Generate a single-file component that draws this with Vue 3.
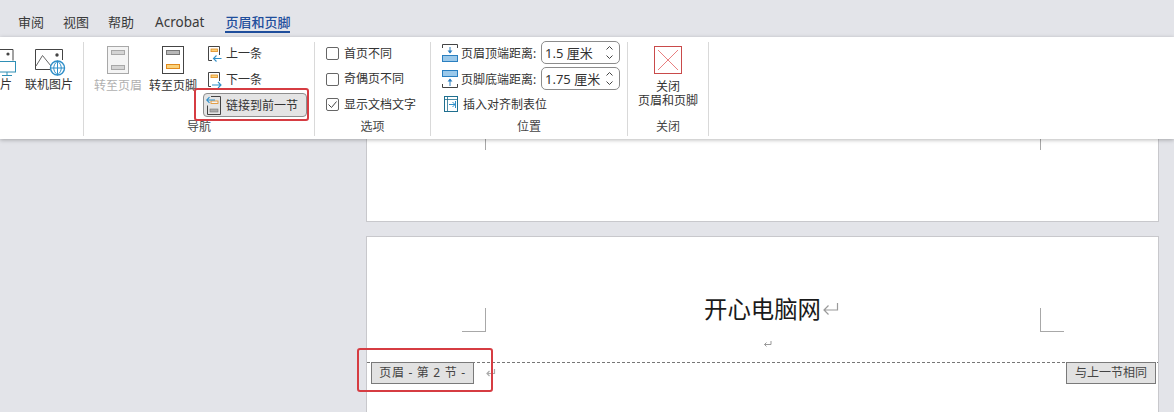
<script setup>
const tabs = ['审阅', '视图', '帮助', 'Acrobat']
</script>

<template>
  <div class="app">
    <nav class="tabs">
      <span v-for="t in tabs" :key="t" class="tab">{{ t }}</span>
      <span class="tab active">页眉和页脚</span>
    </nav>

    <section class="ribbon">
      <div class="group g-insert">
        <div class="group-body insert-body">
          <div class="big clipped">
            <svg class="ico-pic" width="29" height="30" viewBox="0 0 29 30">
              <path d="M.5 3.500h25.500v11" fill="none" stroke="#444" />
              <circle cx="21" cy="8" r="1.600" fill="#444" />
              <rect x="6.500" y="15.500" width="22" height="10.500" fill="#fff" stroke="#2f8fb5" />
              <path d="M20 26v3M15 29.500h10" stroke="#2f8fb5" />
            </svg>
            <span>图片</span>
          </div>
          <div class="big">
            <svg class="ico-online" width="32" height="30" viewBox="0 0 32 30">
              <path d="M28.500 14V3.500H1.500v20H16" fill="none" stroke="#444" />
              <path d="M2 20L8.500 9.500 17 20" fill="none" stroke="#666" />
              <circle cx="23" cy="9" r="1.700" fill="#444" />
              <circle cx="23.500" cy="22" r="7" fill="#fff" stroke="#2f8fc9" stroke-width="1.400" />
              <path d="M16.500 22h14M23.500 15v14M23.500 15c-5 4-5 10 0 14M23.500 15c5 4 5 10 0 14" fill="none" stroke="#2f8fc9" />
            </svg>
            <span>联机图片</span>
          </div>
        </div>
      </div>

      <div class="group g-nav">
        <div class="group-body nav-body">
          <div class="big disabled">
            <svg width="22" height="28" viewBox="0 0 22 28">
              <rect x=".5" y=".5" width="21" height="27" fill="#f4f4f4" stroke="#a8a8a8" />
              <rect x="4.500" y="4.500" width="13" height="4" fill="#d4d4d4" stroke="#a8a8a8" />
              <rect x="4.500" y="19.500" width="13" height="4" fill="#d4d4d4" stroke="#a8a8a8" />
            </svg>
            <span>转至页眉</span>
          </div>
          <div class="big">
            <svg width="22" height="28" viewBox="0 0 22 28">
              <rect x=".5" y=".5" width="21" height="27" fill="#fff" stroke="#444" />
              <rect x="4.500" y="4.500" width="13" height="4" fill="#b8b8b8" stroke="#777" />
              <rect x="4.500" y="18.500" width="13" height="4" fill="#fbd27a" stroke="#e08a1e" />
            </svg>
            <span>转至页脚</span>
          </div>
          <div class="nav-col">
            <div class="small">
              <svg width="14" height="16" viewBox="0 0 14 16">
                <path d="M11.500 9V.5H.5v14H4" fill="none" stroke="#444" />
                <rect x="3" y="3" width="6.500" height="2.600" fill="#fbd27a" stroke="#e08a1e" stroke-width=".8" />
                <path d="M13.500 12.500H5.500M8.500 9.500l-3 3 3 3" fill="none" stroke="#2f8fc9" stroke-width="1.100" />
              </svg>
              <span>上一条</span>
            </div>
            <div class="small">
              <svg width="14" height="17" viewBox="0 0 14 17">
                <path d="M11.500 9V.5H.5v14H3" fill="none" stroke="#444" />
                <rect x="3" y="3" width="6.500" height="2.600" fill="#fbd27a" stroke="#e08a1e" stroke-width=".8" />
                <path d="M4 13h9M10 10l3 3-3 3" fill="none" stroke="#2f8fc9" stroke-width="1.100" />
              </svg>
              <span>下一条</span>
            </div>
            <button class="link-btn">
              <svg width="15" height="19" viewBox="0 0 15 19">
                <path d="M5 .5h9.500v18H1.500v-9" fill="none" stroke="#444" />
                <rect x="5" y="5" width="7" height="2.500" fill="#f4f4f4" stroke="#e08a1e" stroke-width=".8" />
                <rect x="4" y="13" width="8" height="3" fill="#aaa" stroke="#777" stroke-width=".6" />
                <path d="M9 4H.7M3.500 1.200L.7 4l2.800 2.800" fill="none" stroke="#2f8fc9" stroke-width="1.100" />
              </svg>
              <span>链接到前一节</span>
            </button>
          </div>
        </div>
        <div class="group-label">导航</div>
      </div>

      <div class="group g-opts">
        <div class="group-body opts-body">
          <label class="check"><i class="box"></i>首页不同</label>
          <label class="check"><i class="box"></i>奇偶页不同</label>
          <label class="check">
            <i class="box">
              <svg width="11" height="11" viewBox="0 0 11 11"><path d="M1.500 5.500l3 3 5-6" fill="none" stroke="#444" /></svg>
            </i>
            显示文档文字
          </label>
        </div>
        <div class="group-label">选项</div>
      </div>

      <div class="group g-pos">
        <div class="group-body pos-body">
          <div class="pos-row">
            <svg width="16" height="18" viewBox="0 0 16 18">
              <path d="M.5 4V.5h15V4" fill="none" stroke="#444" />
              <path d="M8 3v6" stroke="#2a7fc0" />
              <path d="M5.500 6.500L8 9.500l2.500-3z" fill="#2a7fc0" />
              <rect x=".5" y="11.500" width="15" height="6" fill="#9cc9ea" stroke="#2a7fc0" />
            </svg>
            <span class="pos-text">页眉顶端距离:</span>
            <div class="spin">
              <span>1.5 厘米</span>
              <span class="arrows">
                <svg width="7" height="4" viewBox="0 0 7 4"><path d="M.5 3.500l3-3 3 3" fill="none" stroke="#444" /></svg>
                <svg width="7" height="4" viewBox="0 0 7 4"><path d="M.5.500l3 3 3-3" fill="none" stroke="#444" /></svg>
              </span>
            </div>
          </div>
          <div class="pos-row">
            <svg width="16" height="18" viewBox="0 0 16 18">
              <rect x=".5" y=".5" width="15" height="6" fill="#9cc9ea" stroke="#2a7fc0" />
              <path d="M8 9v7" stroke="#2a7fc0" />
              <path d="M5.500 11.500L8 8.500l2.500 3z" fill="#2a7fc0" />
              <path d="M.5 14v3.500h15V14" fill="none" stroke="#444" />
            </svg>
            <span class="pos-text">页脚底端距离:</span>
            <div class="spin">
              <span>1.75 厘米</span>
              <span class="arrows">
                <svg width="7" height="4" viewBox="0 0 7 4"><path d="M.5 3.500l3-3 3 3" fill="none" stroke="#444" /></svg>
                <svg width="7" height="4" viewBox="0 0 7 4"><path d="M.5.500l3 3 3-3" fill="none" stroke="#444" /></svg>
              </span>
            </div>
          </div>
          <div class="pos-row insert-tab">
            <svg width="14" height="16" viewBox="0 0 14 16">
              <rect x=".5" y=".5" width="13" height="15" fill="#fff" stroke="#1f6f8f" />
              <path d="M.5 3.500h13M3.500 .5v15" stroke="#1f6f8f" stroke-width=".8" />
              <path d="M5 8.500h6M8.500 6l2.500 2.500L8.500 11M11.500 5v7" fill="none" stroke="#2f8fc9" />
            </svg>
            <span>插入对齐制表位</span>
          </div>
        </div>
        <div class="group-label">位置</div>
      </div>

      <div class="group g-close">
        <div class="group-body close-body">
          <svg width="28" height="28" viewBox="0 0 28 28">
            <rect x=".5" y=".5" width="27" height="27" fill="#fff" stroke="#c94a4a" />
            <path d="M4 4l20 20M24 4L4 24" stroke="#e88080" />
          </svg>
          <span class="close-text">关闭<br />页眉和页脚</span>
        </div>
        <div class="group-label">关闭</div>
      </div>
    </section>

    <main class="workspace">
      <div class="page page-1">
        <i class="tick tick-l"></i>
        <i class="tick tick-r"></i>
      </div>
      <div class="page page-2">
        <i class="corner corner-l"></i>
        <i class="corner corner-r"></i>
        <div class="title">开心电脑网<svg width="17" height="14" viewBox="0 0 17 14"><path d="M15.500 1v7H2M6.500 3.500L2 8l4.500 4.500" fill="none" stroke="#9a9a9a" stroke-width="1.200" /></svg></div>
        <div class="para-mark">
          <svg width="9" height="8" viewBox="0 0 9 8"><path d="M8 1v3.500H1.500M3.500 2.500l-2 2 2 2" fill="none" stroke="#999" /></svg>
        </div>
        <div class="header-rule"></div>
        <div class="tag tag-left">页眉 - 第 2 节 -</div>
        <svg class="tag-mark" width="11" height="10" viewBox="0 0 11 10"><path d="M9.500 1v4.500H2M4.500 3L2 5.500 4.500 8" fill="none" stroke="#aaa" stroke-width="1.200" /></svg>
        <div class="tag tag-right">与上一节相同</div>
      </div>
    </main>

    <div class="mark mark-btn"></div>
    <div class="mark mark-tag"></div>
  </div>
</template>

<style>
html, body { margin: 0; background: #e3e4e9; }
</style>

<style scoped>
.app {
  position: relative;
  width: 1174px;
  height: 412px;
  overflow: hidden;
  background: #e3e4e9;
  display: flex;
  flex-direction: column;
  font-family: "Noto Sans", "Noto Sans CJK SC", sans-serif;
  font-size: 12px;
  color: #333;
}
.tabs {
  height: 37px;
  flex: none;
  display: flex;
  align-items: flex-start;
  gap: 19px;
  padding-left: 18px;
  box-sizing: border-box;
}
.tab {
  font-size: 13px;
  line-height: 18px;
  margin-top: 13px;
  color: #3a3a3a;
}
.tab:nth-child(4) { margin-left: 2px; font-size: 13.500px; }
.tab.active {
  color: #1f4e9c;
  font-weight: 500;
  margin-left: 2px;
  height: 18px;
  border-bottom: 2px solid #1f4e9c;
}
.ribbon {
  height: 102px;
  flex: none;
  position: relative;
  z-index: 2;
  display: flex;
  background: #fff;
  box-shadow: 0 1px 4px rgba(0, 0, 0, .28);
}
.group {
  position: relative;
  flex: none;
  box-sizing: border-box;
  margin: 5px 0 3px;
  border-right: 1px solid #d9d9d9;
  height: 94px;
}
.group-label {
  position: absolute;
  left: 0;
  right: 0;
  bottom: 1px;
  text-align: center;
  line-height: 16px;
  color: #444;
}
.group-body { display: flex; }
.g-insert { width: 84px; overflow: hidden; }
.insert-body { gap: 13px; margin-left: -12px; padding-top: 4px; }
.big {
  display: flex;
  flex-direction: column;
  align-items: center;
  gap: 3px;
}
.big span { line-height: 18px; white-space: nowrap; }
.insert-body .big { gap: 0; }
.clipped { width: 24px; }
.ico-pic { margin-left: 3px; flex: none; }
.ico-online { margin-left: 2px; flex: none; }
.g-nav { width: 231px; }
.nav-body { padding: 4px 0 0 10px; gap: 7px; }
.disabled span { color: #b0b0b0; }
.nav-col {
  display: flex;
  flex-direction: column;
  margin: -5px 0 0 3px;
}
.small {
  display: flex;
  align-items: center;
  gap: 4px;
  height: 26px;
  line-height: 16px;
  margin-left: 1px;
}
.link-btn {
  width: 104px;
  height: 24px;
  margin: 0 0 0 -4px;
  padding: 0 0 0 2px;
  display: flex;
  align-items: center;
  gap: 5px;
  box-sizing: border-box;
  background: #e4e4e4;
  border: 1px solid #8e8e8e;
  border-radius: 4px;
  font: inherit;
  color: #333;
}
.g-opts { width: 116px; }
.opts-body {
  flex-direction: column;
  margin-top: -1px;
  padding-left: 11px;
}
.check {
  display: flex;
  align-items: center;
  gap: 5px;
  height: 25.500px;
  line-height: 16px;
}
.box {
  width: 13px;
  height: 13px;
  box-sizing: border-box;
  border: 1px solid #666;
  border-radius: 2px;
  display: flex;
  align-items: center;
  justify-content: center;
}
.g-pos { width: 197px; }
.pos-body {
  flex-direction: column;
  padding: 0 0 0 11px;
  gap: 3px;
  margin-top: -1px;
}
.pos-row {
  display: flex;
  align-items: center;
  height: 23px;
  gap: 3px;
}
.pos-text { width: 77px; white-space: nowrap; }
.spin {
  width: 79px;
  height: 23px;
  box-sizing: border-box;
  border: 1px solid #8c8c8c;
  border-radius: 5px;
  padding: 0 6px 0 3px;
  display: flex;
  align-items: center;
  justify-content: space-between;
  font-size: 13px;
  color: #333;
}
.arrows {
  display: flex;
  flex-direction: column;
  gap: 5px;
}
.arrows svg { display: block; }
.insert-tab { gap: 5px; padding-left: 2px; margin-top: -1px; }
.g-close { width: 81px; }
.close-body {
  flex-direction: column;
  align-items: center;
  padding-top: 4px;
  gap: 6px;
}
.close-text {
  text-align: center;
  line-height: 14px;
}
.workspace {
  flex: 1;
  display: flex;
  flex-direction: column;
  gap: 14px;
  padding-left: 366px;
}
.page {
  position: relative;
  width: 793px;
  box-sizing: border-box;
  background: #fff;
  border: 1px solid #c8c8cc;
}
.page-1 { height: 83px; border-top: 0; }
.page-2 { flex: 1; border-bottom: 0; padding-top: 57px; }
.tick {
  position: absolute;
  top: 0;
  width: 1px;
  height: 11px;
  background: #a8a8a8;
}
.tick-l { left: 118px; }
.tick-r { left: 673px; }
.corner {
  position: absolute;
  top: 71px;
  width: 23px;
  height: 23px;
  border-bottom: 1px solid #a8a8a8;
}
.corner-l { left: 95px; border-right: 1px solid #a8a8a8; }
.corner-r { left: 673px; border-left: 1px solid #a8a8a8; }
.title {
  display: flex;
  align-items: center;
  gap: 1px;
  height: 30px;
  padding-left: 337px;
  font-size: 23.400px;
  line-height: 30px;
  color: #1a1a1a;
}
.para-mark {
  margin: 16px 0 0 396px;
  height: 8px;
  line-height: 8px;
}
.para-mark svg { display: block; }
.header-rule {
  position: absolute;
  left: 0;
  right: 0;
  top: 125px;
  height: 1px;
  background: repeating-linear-gradient(90deg, #777 0 3px, transparent 3px 5px);
}
.tag {
  position: absolute;
  top: 125px;
  height: 22px;
  box-sizing: border-box;
  background: #e2e2e2;
  border: 1px solid #7a7a7a;
  line-height: 20px;
  text-align: center;
  color: #444;
  white-space: nowrap;
}
.tag-left { left: 4px; width: 103px; letter-spacing: .7px; }
.tag-right { left: 699px; width: 90px; }
.tag-mark { position: absolute; left: 118px; top: 131px; }
.mark {
  position: absolute;
  z-index: 3;
  box-sizing: border-box;
  border: 2px solid #d63c42;
  border-radius: 3px;
}
.mark-btn { left: 194px; top: 88px; width: 115px; height: 33px; }
.mark-tag { left: 357px; top: 348px; width: 136px; height: 44px; }
</style>
